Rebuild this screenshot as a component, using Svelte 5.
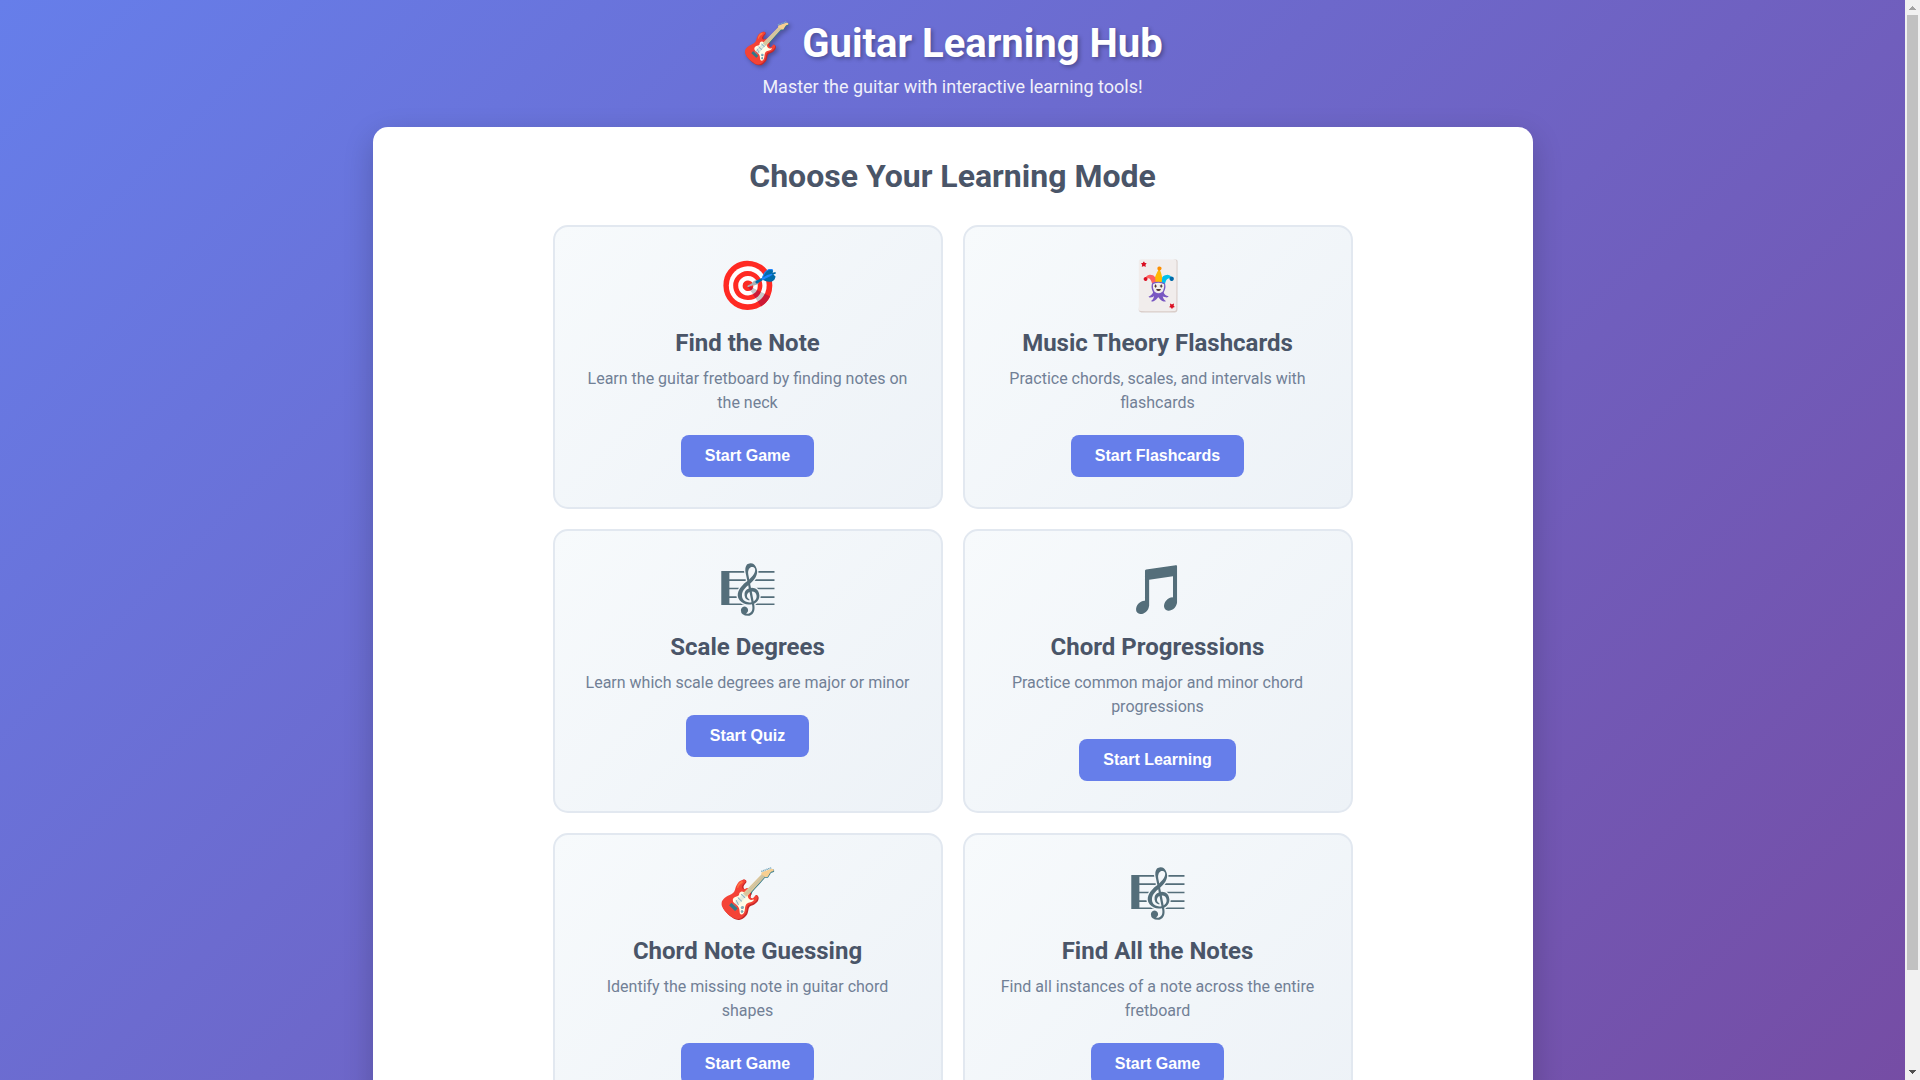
<script>
  const modes = [
    { icon: '🎯', title: 'Find the Note', text: 'Learn the guitar fretboard by finding notes on the neck', action: 'Start Game' },
    { icon: '🃏', title: 'Music Theory Flashcards', text: 'Practice chords, scales, and intervals with flashcards', action: 'Start Flashcards' },
    { icon: '🎼', title: 'Scale Degrees', text: 'Learn which scale degrees are major or minor', action: 'Start Quiz' },
    { icon: '🎵', title: 'Chord Progressions', text: 'Practice common major and minor chord progressions', action: 'Start Learning' },
    { icon: '🎸', title: 'Chord Note Guessing', text: 'Identify the missing note in guitar chord shapes', action: 'Start Game' },
    { icon: '🎼', title: 'Find All the Notes', text: 'Find all instances of a note across the entire fretboard', action: 'Start Game' }
  ];

  let viewHeight = $state(1);
  let pageHeight = $state(1);
  let scrolled = $state(0);
  let thumbSize = $derived(Math.min(100, (viewHeight / pageHeight) * 100));
  let thumbStart = $derived((scrolled / pageHeight) * 100);
</script>

<div class="window">
  <div class="view" bind:clientHeight={viewHeight} onscroll={(e) => (scrolled = e.currentTarget.scrollTop)}>
    <div class="page" bind:clientHeight={pageHeight}>
      <div class="container">
        <header>
          <h1>🎸 Guitar Learning Hub</h1>
          <p>Master the guitar with interactive learning tools!</p>
        </header>
        <main>
          <h2>Choose Your Learning Mode</h2>
          <div class="grid">
            {#each modes as mode}
              <section class="card">
                <div class="icon">{mode.icon}</div>
                <h3>{mode.title}</h3>
                <p>{mode.text}</p>
                <button>{mode.action}</button>
              </section>
            {/each}
          </div>
        </main>
      </div>
    </div>
  </div>
  <div class="scrollbar" aria-hidden="true">
    <svg class="arrow" viewBox="0 0 15 15" shape-rendering="crispEdges"><path d="M7 6h1v1h1v1h1v1h1v1H4V9h1V8h1V7h1z" fill="#a3a3a3" /></svg>
    <div class="track">
      <div class="thumb" style:height="{thumbSize}%" style:margin-top="{thumbStart}%"></div>
    </div>
    <svg class="arrow" viewBox="0 0 15 15" shape-rendering="crispEdges"><path d="M4 5h7v1h-1v1h-1v1h-1v1H7V8H6V7H5V6H4z" fill="#505050" /></svg>
  </div>
</div>

<style>
  :global(body) { margin: 0; font-family: Roboto, sans-serif; color: #333; }
  * { box-sizing: border-box; margin: 0; padding: 0; }
  .window { display: flex; height: 100vh; }
  .view { flex: 1; min-width: 0; overflow-y: auto; scrollbar-width: none; }
  .page { min-height: 100%; padding-bottom: 20px; background: linear-gradient(135deg, #667eea 0%, #764ba2 100%); }
  .container { max-width: 1200px; margin: 0 auto; padding: 20px; }
  header { text-align: center; margin-bottom: 30px; color: white; }
  h1 { font-size: 40px; line-height: 47px; margin-bottom: 10px; text-shadow: 2px 2px 4px rgba(0, 0, 0, 0.3); }
  header p { font-size: 18px; line-height: 20px; opacity: 0.9; }
  main { background: white; border-radius: 15px; padding: 30px; box-shadow: 0 10px 30px rgba(0, 0, 0, 0.2); text-align: center; }
  h2 { font-size: 32px; line-height: 38px; color: #4a5568; margin-bottom: 30px; }
  .grid { display: grid; grid-template-columns: repeat(2, 1fr); gap: 20px; max-width: 800px; margin: 0 auto; }
  .card { background: linear-gradient(135deg, #f7fafc, #edf2f7); border: 2px solid #e2e8f0; border-radius: 15px; padding: 30px; }
  .icon { font-size: 48px; line-height: 57px; margin-bottom: 15px; }
  h3 { font-size: 24px; line-height: 28px; color: #4a5568; margin-bottom: 10px; }
  .card p { font-size: 16px; line-height: 24px; color: #718096; margin-bottom: 20px; }
  button { background: #667eea; color: white; border: none; border-radius: 8px; padding: 12px 24px; font: bold 16px "Liberation Sans", sans-serif; cursor: pointer; }
  .scrollbar { display: flex; flex-direction: column; width: 15px; background: #f1f1f1; }
  .arrow { display: block; width: 15px; height: 15px; flex: none; }
  .track { flex: 1; min-height: 0; padding: 0 2px; }
  .thumb { background: #c1c1c1; }
</style>
